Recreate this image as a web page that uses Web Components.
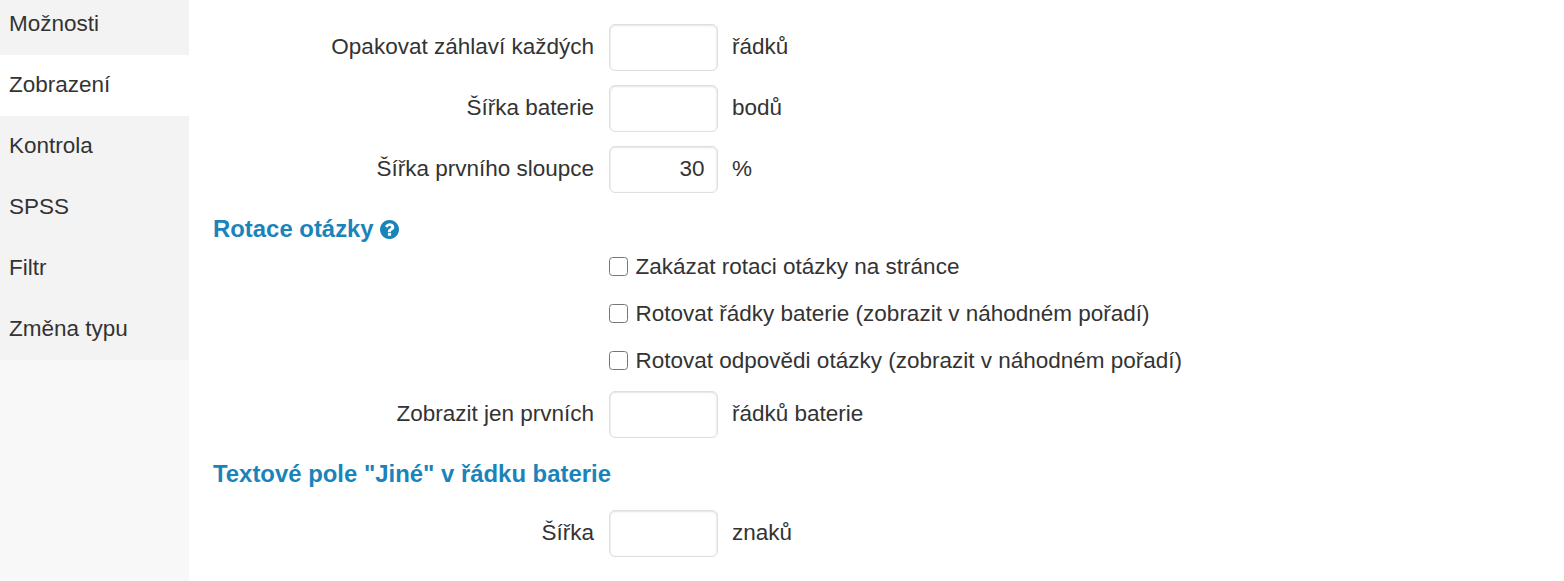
<!DOCTYPE html>
<html lang="cs"><head><meta charset="utf-8"><title>Zobrazení</title>
<style>
html,body{margin:0;padding:0;height:100%;background:#fff;overflow:hidden}
body{font:22.5px/30px "Liberation Sans",Arial,sans-serif;color:#333}
</style></head><body>
<app-shell>
  <side-nav slot="nav">
    <nav-item>Možnosti</nav-item>
    <nav-item active>Zobrazení</nav-item>
    <nav-item>Kontrola</nav-item>
    <nav-item>SPSS</nav-item>
    <nav-item>Filtr</nav-item>
    <nav-item>Změna typu</nav-item>
  </side-nav>
  <form-row label="Opakovat záhlaví každých" unit="řádků"></form-row>
  <form-row label="Šířka baterie" unit="bodů"></form-row>
  <form-row label="Šířka prvního sloupce" unit="%" value="30"></form-row>
  <section-title help>Rotace otázky</section-title>
  <check-row>Zakázat rotaci otázky na stránce</check-row>
  <check-row>Rotovat řádky baterie (zobrazit v náhodném pořadí)</check-row>
  <check-row>Rotovat odpovědi otázky (zobrazit v náhodném pořadí)</check-row>
  <form-row label="Zobrazit jen prvních" unit="řádků baterie" style="margin-top:7px"></form-row>
  <section-title>Textové pole "Jiné" v řádku baterie</section-title>
  <form-row label="Šířka" unit="znaků"></form-row>
</app-shell>
<script>
function def(name, html, setup){
  customElements.define(name, class extends HTMLElement{
    connectedCallback(){
      if(this.shadowRoot) return;
      const r=this.attachShadow({mode:'open'});
      r.innerHTML=html;
      if(setup) setup(this,r);
    }
  });
}
def('app-shell',`<style>
:host{display:flex;height:100vh;align-items:stretch}
.side{flex:0 0 189px;background:#f8f8f8;overflow:hidden}
.main{flex:1;display:flex;flex-direction:column;padding-top:24px;min-width:0}
</style><div class="side"><slot name="nav"></slot></div><div class="main"><slot></slot></div>`);
def('side-nav',`<style>:host{display:flex;flex-direction:column;margin-top:-6px}</style><slot></slot>`);
def('nav-item',`<style>
:host{display:flex;flex:none;align-items:center;height:61px;padding:0 0 2px 9px;background:#f3f3f3;color:#333;box-sizing:border-box}
:host([active]){background:#fff}
</style><slot></slot>`);
def('form-row',`<style>
:host{display:grid;flex:none;grid-template-columns:405px 109px auto;column-gap:14.5px;align-items:center;margin-bottom:14px}
.l{text-align:right;margin-top:-2px}
.u{margin-top:-2px}
input{box-sizing:border-box;width:109px;height:47px;border:1px solid #dcdfe4;border-radius:6px;background:#fff;
 font:inherit;color:#333;text-align:right;padding:0 12px 2px;outline:0;margin:0;box-shadow:inset 0 1px 2px rgba(0,0,0,.1),inset 1px 0 1px rgba(0,0,0,.04),inset -1px 0 1px rgba(0,0,0,.04)}
</style><div class="l"></div><input type="text"><div class="u"></div>`,(h,r)=>{
  r.querySelector('.l').textContent=h.getAttribute('label');
  r.querySelector('.u').textContent=h.getAttribute('unit');
  r.querySelector('input').value=h.getAttribute('value')||'';
});
def('section-title',`<style>
:host{display:flex;flex:none;align-items:center;height:30px;margin:7px 0 21px 24px;font-weight:700;font-size:23.9px;color:#1a84ba}
:host([help]){margin-bottom:-1px}
svg{display:none;width:19px;height:19px;margin-left:6.5px;fill:currentColor}
:host([help]) svg{display:block}
</style><slot></slot><svg viewBox="128 128 1536 1536"><path d="M1024 1376v-192q0-14-9-23t-23-9h-192q-14 0-23 9t-9 23v192q0 14 9 23t23 9h192q14 0 23-9t9-23zm256-672q0-88-55.5-163t-138.5-116-170-41q-243 0-371 213-15 24 8 42l132 100q7 6 19 6 16 0 25-12 53-68 86-92 34-24 86-24 48 0 85.5 26t37.5 59q0 38-20 61t-68 45q-63 28-115.5 86.5t-52.5 125.5v36q0 14 9 23t23 9h192q14 0 23-9t9-23q0-19 21.5-49.5t54.5-49.5q32-18 49-28.5t46-35 44.5-48 28-60.5 12.5-81zm384 192q0 209-103 385.5t-279.5 279.5-385.5 103-385.5-103-279.5-279.5-103-385.5 103-385.5 279.5-279.5 385.5-103 385.5 103 279.5 279.5 103 385.5z"/></svg>`);
def('check-row',`<style>
:host{display:flex;flex:none;align-items:center;height:47px;padding-left:420px}
input{appearance:none;box-sizing:border-box;width:19px;height:19px;margin:0 7.5px 0 0;flex:none;background:#fff;border:1.4px solid #767676;border-radius:3.5px}
</style><input type="checkbox"><slot></slot>`);
</script>
</body></html>
